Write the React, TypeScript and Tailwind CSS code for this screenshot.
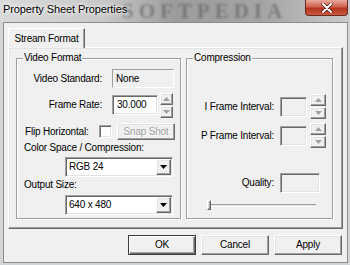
import type { ReactNode } from "react";

const raised =
  "border border-t-white border-l-white border-b-[#696969] border-r-[#696969] bg-[#f0f0f0] shadow-[inset_-1px_-1px_0_#a0a0a0,inset_1px_1px_0_#e3e3e3]";
const sunken =
  "border border-t-[#a0a0a0] border-l-[#a0a0a0] border-b-white border-r-white shadow-[inset_1px_1px_0_#696969,inset_-1px_-1px_0_#e3e3e3]";
const thinSunken =
  "border border-t-[#a0a0a0] border-l-[#a0a0a0] border-b-white border-r-white";

function Arrow({ up, color }: { up?: boolean; color: string }) {
  return (
    <svg width="7" height="4" viewBox="0 0 7 4">
      <path d={up ? "M3.5 0L7 4H0Z" : "M0 0H7L3.5 4Z"} fill={color} />
    </svg>
  );
}

function Spin({ wide }: { wide?: boolean }) {
  const w = wide ? "w-[16px]" : "w-[13px]";
  return (
    <div className="flex flex-col gap-px">
      <div className={`flex h-[12px] items-center justify-center ${w} ${raised}`}>
        <Arrow up color="#a0a0a0" />
      </div>
      <div className={`flex h-[12px] items-center justify-center ${w} ${raised}`}>
        <Arrow color="#a0a0a0" />
      </div>
    </div>
  );
}

function Combo({ value }: { value: string }) {
  return (
    <div
      className={`flex h-[20px] w-[108px] items-center justify-between bg-white pl-[3px] pr-[1px] ${sunken}`}
    >
      <span>{value}</span>
      <div className={`flex h-[16px] w-[15px] items-center justify-center ${raised}`}>
        <Arrow color="#000" />
      </div>
    </div>
  );
}

function Group({
  title,
  className,
  children,
}: {
  title: string;
  className: string;
  children: ReactNode;
}) {
  return (
    <div
      className={`relative border border-[#a0a0a0] shadow-[inset_1px_1px_0_#fff,1px_1px_0_#fff] ${className}`}
    >
      <span className="absolute -top-[7px] left-[6px] bg-[#f0f0f0] px-[1px] leading-[12px]">
        {title}
      </span>
      {children}
    </div>
  );
}

function Button({ label, isDefault }: { label: string; isDefault?: boolean }) {
  return (
    <div
      className={`flex h-[20px] w-[68px] items-center justify-center ${
        isDefault
          ? "border border-[#3c3c3c] bg-[#f0f0f0] shadow-[inset_1px_1px_0_#fff,inset_-1px_-1px_0_#696969,inset_-2px_-2px_0_#a0a0a0]"
          : raised
      }`}
    >
      {label}
    </div>
  );
}

function TitleBar() {
  return (
    <div className="relative flex h-[22px] shrink-0 items-start overflow-hidden bg-[linear-gradient(90deg,#dadada_0%,#c8c8c8_30%,#9c9c9c_50%,#a4a4a4_75%,#cbcbcb_100%)]">
      {/* watermark behind the caption */}
      <span
        aria-hidden
        className="absolute left-[122px] top-0 font-['Liberation_Serif',serif] text-[21px] font-bold leading-[22px] tracking-[5px] text-[#5e5e5e] opacity-60 blur-[1.2px]"
      >
        SOFTPEDIA
      </span>
      <span className="relative ml-[3px] mt-[3px] text-[11px] leading-[13px] tracking-[-0.1px] [text-shadow:0_0_5px_#fff,0_0_3px_#fff]">
        Property Sheet Properties
      </span>
      <div className="relative ml-auto mr-[2px] flex h-[16px] w-[43px] items-center justify-center rounded-b-[4px] border border-t-0 border-[#6b2a22] bg-[linear-gradient(#e9ab9b,#d06250_45%,#b7341f_55%,#c85a40)]">
        <svg width="12" height="10" viewBox="0 0 12 10">
          <path d="M2 1L10 9M10 1L2 9" stroke="#4a1a14" strokeWidth="3.4" strokeLinecap="round" />
          <path d="M2 1L10 9M10 1L2 9" stroke="#fff" strokeWidth="2" strokeLinecap="round" />
        </svg>
      </div>
    </div>
  );
}

export default function App() {
  return (
    <div className="flex h-[265px] w-[350px] flex-col overflow-hidden bg-[#d3d5d7] font-['Liberation_Sans',Arial,sans-serif] text-[10px] leading-[12px] tracking-[-0.2px] text-black">
      <TitleBar />

      <div className="ml-[3px] mr-[2px] flex h-[241px] flex-col border border-[#8c8c8c] bg-[#f0f0f0] pl-[4px] pt-[5px]">
        <div className="relative z-10 -mb-px flex h-[20px] w-[77px] items-center justify-center border border-b-0 border-l-white border-t-white border-r-[#696969] bg-[#f0f0f0] shadow-[inset_-1px_0_0_#a0a0a0]">
          Stream Format
        </div>

        <div className="flex h-[182px] w-[335px] gap-[5px] border border-l-white border-t-white border-b-[#696969] border-r-[#696969] pl-[7px] pt-[10px] shadow-[inset_-1px_-1px_0_#a0a0a0,inset_1px_1px_0_#e3e3e3]">
          <Group title="Video Format" className="h-[161px] w-[165px]">
            <div className="flex flex-col pt-[10px]">
              <div className="flex h-[19px] items-center">
                <span className="w-[85px] text-right">Video Standard:</span>
                <div className={`ml-[10px] flex h-[19px] w-[62px] items-center pl-[3px] ${thinSunken}`}>
                  None
                </div>
              </div>

              <div className="mt-[5px] flex h-[24px] items-center">
                <span className="w-[85px] text-right">Frame Rate:</span>
                <div className={`ml-[10px] flex h-[20px] w-[46px] items-center bg-white pl-[4px] ${sunken}`}>
                  30.000
                </div>
                <div className="ml-[2px]">
                  <Spin />
                </div>
              </div>

              <div className="mt-[6px] flex h-[17px] items-center pl-[8px]">
                <span className="w-[74px]">Flip Horizontal:</span>
                <div className={`h-[13px] w-[13px] bg-white ${sunken}`} />
                <div className={`ml-[5px] flex h-[17px] w-[58px] items-center justify-center text-[#a0a0a0] [text-shadow:1px_1px_0_#fff] ${raised}`}>
                  Snap Shot
                </div>
              </div>

              <div className="mt-[1px] h-[13px] pl-[7px] leading-[13px]">
                Color Space / Compression:
              </div>
              <div className="mt-[3px] pl-[48px]">
                <Combo value="RGB 24" />
              </div>

              <div className="mt-[1px] h-[13px] pl-[7px] leading-[13px]">Output Size:</div>
              <div className="mt-[4px] pl-[48px]">
                <Combo value="640 x 480" />
              </div>
            </div>
          </Group>

          <Group title="Compression" className="h-[161px] w-[147px]">
            <div className="flex flex-col pt-[35px]">
              <div className="flex h-[25px] items-center">
                <span className="w-[87px] text-right">I Frame Interval:</span>
                <div className={`ml-[6px] h-[20px] w-[27px] ${sunken}`} />
                <div className="ml-[3px]">
                  <Spin wide />
                </div>
              </div>

              <div className="mt-[4px] flex h-[25px] items-center">
                <span className="w-[87px] text-right">P Frame Interval:</span>
                <div className={`ml-[6px] h-[20px] w-[27px] ${sunken}`} />
                <div className="ml-[3px]">
                  <Spin wide />
                </div>
              </div>

              <div className="mt-[25px] flex h-[20px] items-center">
                <span className="w-[87px] text-right">Quality:</span>
                <div className={`ml-[6px] h-[20px] w-[40px] ${sunken}`} />
              </div>

              <div className="relative ml-[20px] mt-[7px] flex h-[10px] w-[109px] items-center">
                <div className="h-[3px] w-full border-t border-b border-t-[#a0a0a0] border-b-white bg-[#e3e3e3]" />
                <div className={`absolute left-0 top-0 h-[10px] w-[4px] ${raised}`} />
              </div>
            </div>
          </Group>
        </div>

        <div className="mt-[6px] flex justify-end gap-[5px] pr-[5px]">
          <Button label="OK" isDefault />
          <Button label="Cancel" />
          <Button label="Apply" />
        </div>
      </div>
    </div>
  );
}
